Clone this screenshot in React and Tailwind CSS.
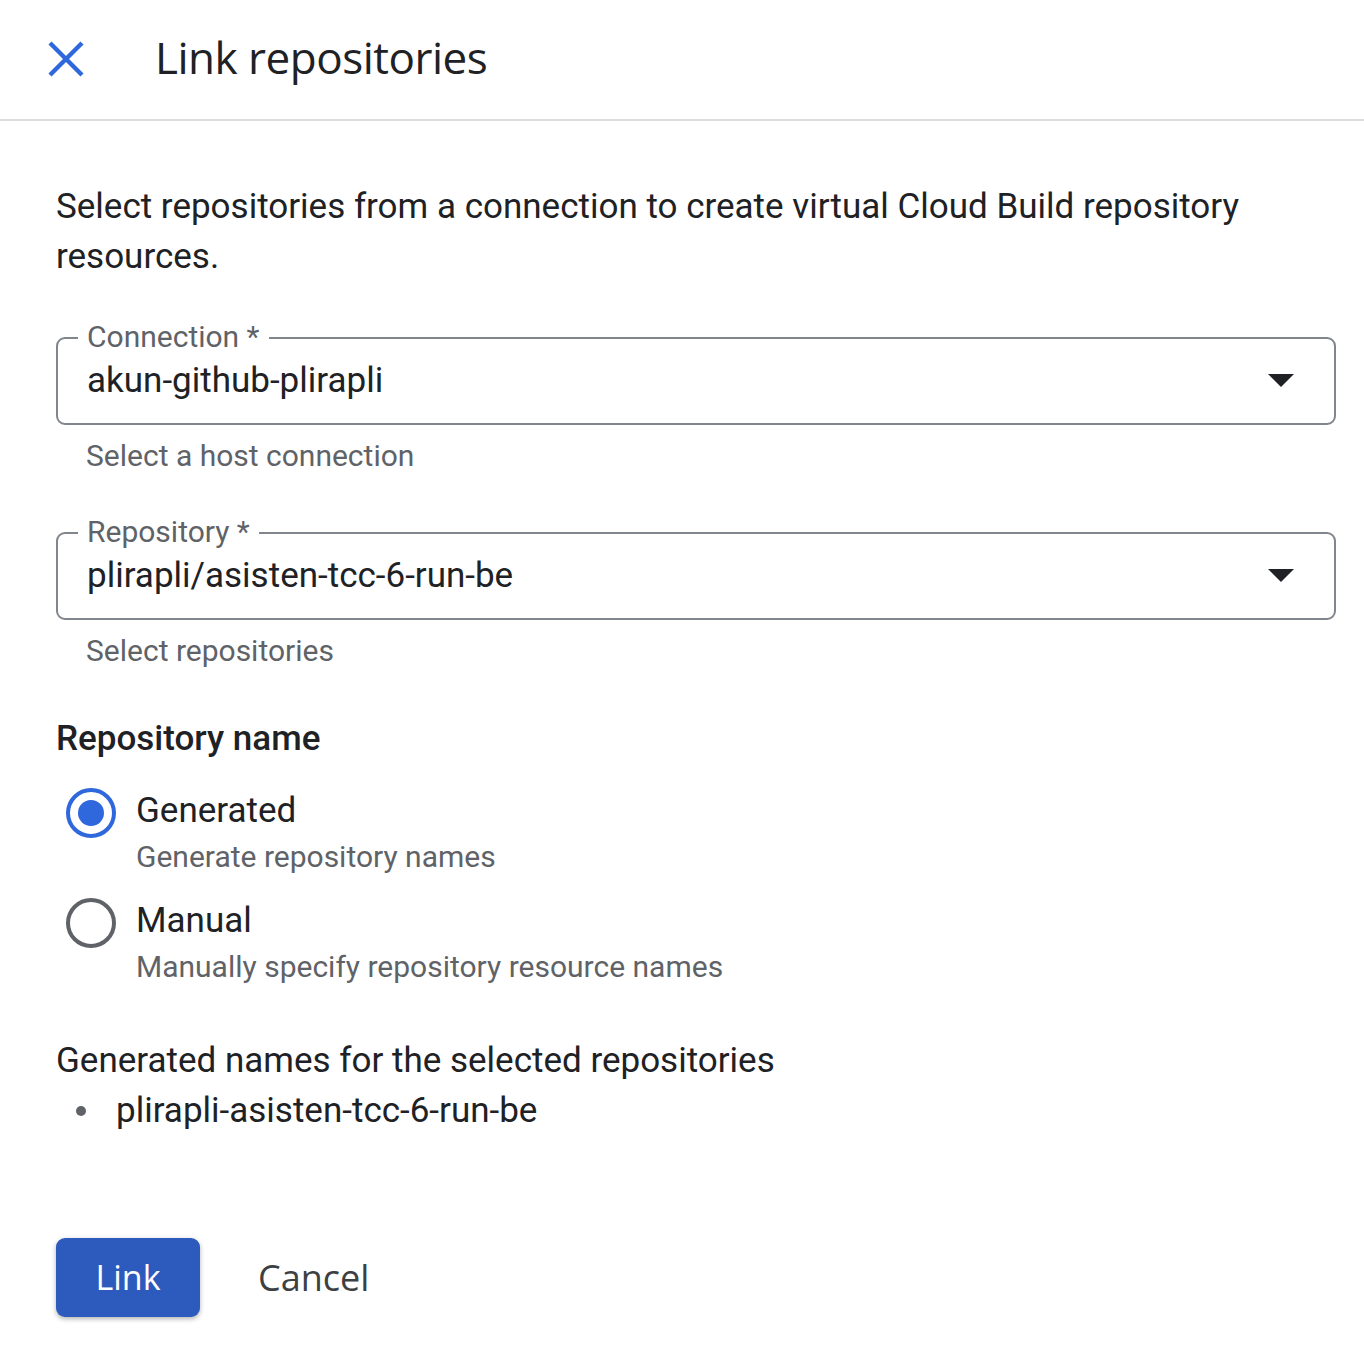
const body = { fontFamily: 'Roboto, "Liberation Sans", sans-serif' };
const title = { fontFamily: '"Open Sans", Roboto, sans-serif' };

function SelectField({ label, value, helper }) {
  return (
    <div className="flex flex-col">
      <div className="relative h-[88px] border-2 border-[#80868b] rounded-[9px] flex items-center pl-[29px] pr-[40px]">
        <span className="absolute -top-[20px] left-[20px] bg-white px-[9px] text-[30px] leading-[36px] text-[#5f6368]">
          {label}
        </span>
        <span className="flex-1 text-[35px] text-[#202124] mt-[1px]">{value}</span>
        <svg width="26" height="13" viewBox="0 0 26 13" className="-mt-[2px]">
          <path d="M0 0 L26 0 L13 13 Z" fill="#202124" />
        </svg>
      </div>
      <div className="pl-[30px] pt-[13px] text-[30px] leading-[36px] text-[#5f6368]">{helper}</div>
    </div>
  );
}

function Radio({ checked, label, sub }) {
  return (
    <div className="flex">
      <div className="w-[80px] flex pl-[10px] pt-[2px]">
        {checked ? (
          <div className="w-[50px] h-[50px] rounded-full border-[4px] border-[#2f67dc] flex items-center justify-center">
            <div className="w-[26px] h-[26px] rounded-full bg-[#2f67dc]" />
          </div>
        ) : (
          <div className="w-[50px] h-[50px] rounded-full border-[4px] border-[#5f6368]" />
        )}
      </div>
      <div className="flex flex-col">
        <div className="text-[35px] leading-[50px] text-[#202124]">{label}</div>
        <div className="text-[30px] leading-[40px] text-[#5f6368] mt-[1px]">{sub}</div>
      </div>
    </div>
  );
}

export default function App() {
  return (
    <div className="w-[1364px] min-h-[1360px] bg-white" style={body}>
      {/* Header */}
      <div className="h-[121px] border-b-2 border-[#dadce0] flex items-center">
        <div className="w-[157px] pl-[48px] -mt-[2px]">
          <svg width="36" height="36" viewBox="0 0 36 36">
            <path d="M2 2 L34 34 M34 2 L2 34" stroke="#2f67dc" strokeWidth="4.4" />
          </svg>
        </div>
        <h1 className="text-[44px] text-[#202124] -mt-[6px] -ml-[2px] tracking-[-0.5px]" style={title}>
          Link repositories
        </h1>
      </div>

      <div className="px-[56px] pr-[28px]">
        <p className="pt-[61px] text-[35px] leading-[50px] text-[#202124] pr-[40px]">
          Select repositories from a connection to create virtual Cloud Build repository resources.
        </p>

        <div className="mt-[55px]">
          <SelectField label="Connection *" value="akun-github-plirapli" helper="Select a host connection" />
        </div>
        <div className="mt-[58px]">
          <SelectField label="Repository *" value="plirapli/asisten-tcc-6-run-be" helper="Select repositories" />
        </div>

        <h2 className="mt-[45px] text-[35px] leading-[50px] text-[#202124] font-medium">
          Repository name
        </h2>

        <div className="mt-[22px] flex flex-col gap-[19px]">
          <Radio checked label="Generated" sub="Generate repository names" />
          <Radio label="Manual" sub="Manually specify repository resource names" />
        </div>

        <div className="mt-[49px] text-[35px] leading-[50px] text-[#202124]">
          Generated names for the selected repositories
        </div>
        <ul className="flex flex-col">
          <li className="flex items-center text-[35px] leading-[50px] text-[#202124]">
            <span className="w-[10px] h-[10px] rounded-full bg-[#5f6368] ml-[20px] mr-[30px]" />
            plirapli-asisten-tcc-6-run-be
          </li>
        </ul>

        <div className="mt-[102px] flex items-center gap-[58px]">
          <button
            className="w-[144px] h-[79px] rounded-[9px] bg-[#2d5bbd] text-white text-[34px] shadow-[0_2px_5px_rgba(0,0,0,0.3)]"
            style={title}
          >
            Link
          </button>
          <button className="text-[36px] text-[#3c4043]" style={title}>
            Cancel
          </button>
        </div>
      </div>
    </div>
  );
}
